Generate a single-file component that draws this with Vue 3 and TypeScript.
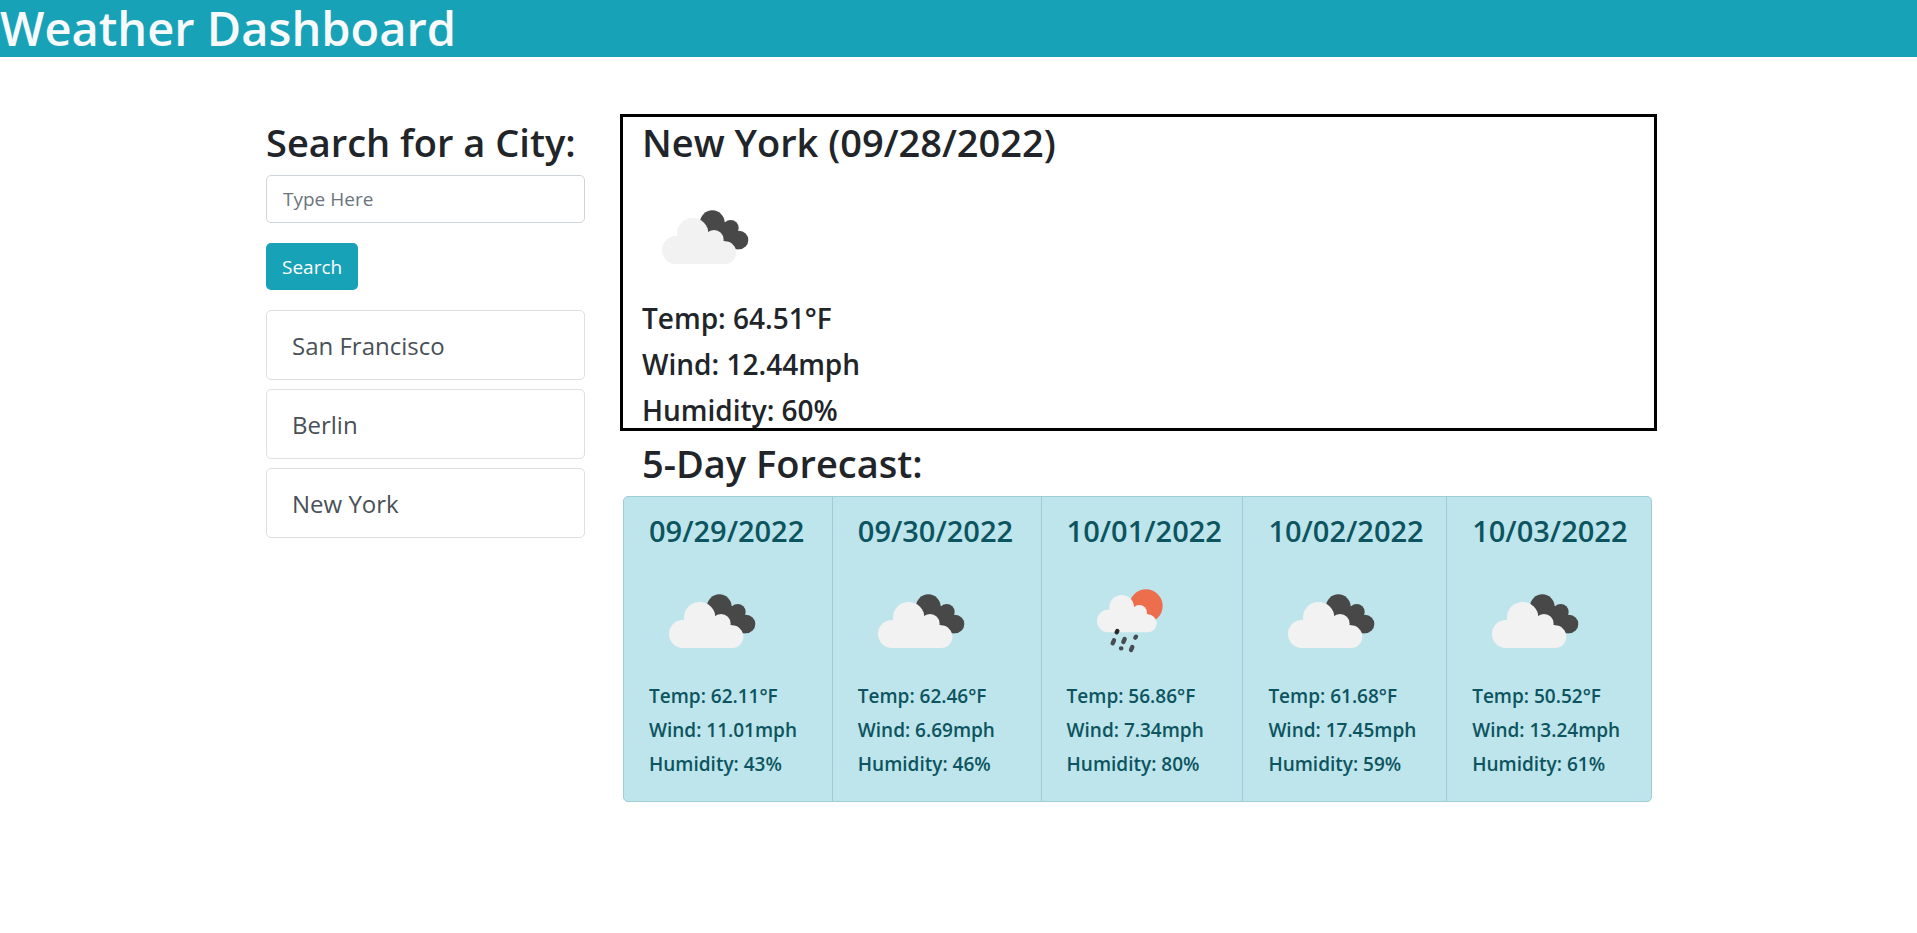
<script setup lang="ts">
import { ref } from 'vue'

type Condition = 'clouds' | 'rain'

interface Weather {
  date: string
  condition: Condition
  temp: string
  wind: string
  humidity: string
}

const query = ref('')
const history = ref<string[]>(['San Francisco', 'Berlin', 'New York'])
const city = ref('New York')

const current: Weather = { date: '09/28/2022', condition: 'clouds', temp: '64.51', wind: '12.44', humidity: '60' }

const forecast: Weather[] = [
  { date: '09/29/2022', condition: 'clouds', temp: '62.11', wind: '11.01', humidity: '43' },
  { date: '09/30/2022', condition: 'clouds', temp: '62.46', wind: '6.69', humidity: '46' },
  { date: '10/01/2022', condition: 'rain', temp: '56.86', wind: '7.34', humidity: '80' },
  { date: '10/02/2022', condition: 'clouds', temp: '61.68', wind: '17.45', humidity: '59' },
  { date: '10/03/2022', condition: 'clouds', temp: '50.52', wind: '13.24', humidity: '61' },
]

function search() {
  const name = query.value.trim()
  if (!name) return
  if (!history.value.includes(name)) history.value.push(name)
  city.value = name
  query.value = ''
}
</script>

<template>
  <svg class="symbols" aria-hidden="true">
    <symbol id="clouds" viewBox="0 0 375 375">
      <g fill="#484848">
        <circle cx="211" cy="143" r="37" />
        <circle cx="266" cy="159" r="24" />
        <circle cx="291" cy="195" r="28" />
        <path d="M192 165 242 138 286 164 291 223 252 223Z" />
      </g>
      <g fill="#f2f2f2">
        <circle cx="152" cy="176" r="47" />
        <circle cx="102" cy="225" r="42" />
        <circle cx="216" cy="194" r="29" />
        <circle cx="249" cy="233" r="34" />
        <path d="M102 267V183L152 176 216 194 249 199V267Z" />
      </g>
    </symbol>
    <symbol id="rain" viewBox="0 0 375 375">
      <circle cx="237" cy="141" r="50" fill="#ec6e4c" />
      <g fill="#f2f2f2">
        <circle cx="164" cy="145" r="37" />
        <circle cx="124" cy="186" r="34" />
        <circle cx="217" cy="161" r="23" />
        <circle cx="242" cy="193" r="27" />
        <path d="M124 220V152L164 145 217 161 242 166V220Z" />
      </g>
      <g stroke="#484b52" stroke-width="13" stroke-linecap="round">
        <path d="M149 220 151 216" stroke="#26282c" />
        <path d="M137 253 141 244M169 249 173 240M205 236 207 233M162 268H163M192 273 196 264" />
      </g>
    </symbol>
  </svg>

  <header class="banner">
    <h1>Weather Dashboard</h1>
  </header>

  <main class="container">
    <aside class="sidebar">
      <form @submit.prevent="search">
        <h2><label for="city">Search for a City:</label></h2>
        <input id="city" v-model="query" type="text" placeholder="Type Here" autocomplete="off" />
        <button class="submit" type="submit">Search</button>
      </form>
      <ul class="history">
        <li v-for="name in history" :key="name">
          <button type="button" @click="city = name">{{ name }}</button>
        </li>
      </ul>
    </aside>

    <div class="results">
      <section class="current">
        <h2>{{ city }} ({{ current.date }})</h2>
        <svg class="icon" role="img" :aria-label="current.condition"><use :href="'#' + current.condition" /></svg>
        <p>Temp: {{ current.temp }}°F</p>
        <p>Wind: {{ current.wind }}mph</p>
        <p>Humidity: {{ current.humidity }}%</p>
      </section>

      <section>
        <h2 class="forecast-title">5-Day Forecast:</h2>
        <ul class="forecast">
          <li v-for="day in forecast" :key="day.date">
            <h3>{{ day.date }}</h3>
            <svg class="icon" role="img" :aria-label="day.condition"><use :href="'#' + day.condition" /></svg>
            <p>Temp: {{ day.temp }}°F</p>
            <p>Wind: {{ day.wind }}mph</p>
            <p>Humidity: {{ day.humidity }}%</p>
          </li>
        </ul>
      </section>
    </div>
  </main>
</template>

<style>
body {
  margin: 0;
  background: #fff;
  color: #212529;
  font-family: 'Segoe UI', 'Open Sans', 'Noto Sans', sans-serif;
}
</style>

<style scoped>
* {
  box-sizing: border-box;
}

h1,
h2,
h3,
p,
ul {
  margin: 0;
  padding: 0;
}

ul {
  list-style: none;
}

input,
button {
  font-family: inherit;
}

.symbols {
  position: absolute;
  width: 0;
  height: 0;
}

.banner {
  background: #17a2b8;
  color: #f8f9fa;
}

h1 {
  font-size: 47px;
  font-weight: 600;
  line-height: 57px;
}

h2 {
  margin-bottom: 8px;
  font-size: 38px;
  font-weight: 600;
  line-height: 50px;
}

.container {
  display: grid;
  grid-template-columns: minmax(0, 319fr) minmax(0, 1037fr);
  gap: 35px;
  max-width: 1425px;
  margin: 0 auto;
  padding: 57px 14px 40px 20px;
}

.sidebar {
  padding-top: 3px;
}

.sidebar h2 {
  white-space: nowrap;
}

input {
  display: block;
  width: 100%;
  height: 48px;
  padding: 0 16px;
  border: 1px solid #ced4da;
  border-radius: 5px;
  color: #495057;
  font-size: 19px;
}

input::placeholder {
  color: #6c757d;
  opacity: 1;
}

.submit {
  height: 47px;
  margin: 20px 0;
  padding: 0 16px;
  border: 0;
  border-radius: 5px;
  background: #17a2b8;
  color: #fff;
  font-size: 19px;
  cursor: pointer;
}

.history {
  display: grid;
  gap: 9px;
}

.history button {
  width: 100%;
  height: 70px;
  padding: 0 25px;
  border: 1px solid #dfdfdf;
  border-radius: 5px;
  background: #fff;
  color: #495057;
  font-size: 24px;
  text-align: left;
  cursor: pointer;
}

.icon {
  display: block;
  width: 125px;
  height: 125px;
}

.current {
  padding: 0 19px;
  border: 3px solid #000;
}

.current p {
  font-size: 28px;
  font-weight: 600;
  line-height: 36px;
}

p + p {
  margin-top: 10px;
}

.forecast-title {
  margin-top: 7px;
  padding-left: 22px;
}

.forecast {
  display: grid;
  grid-template-columns: 208fr 209fr 202fr 204fr 205fr;
  margin: 0 5px 0 3px;
  border: 1px solid #9fcdd4;
  border-radius: 5px;
  background: #bee5eb;
  color: #0c5460;
}

.forecast li {
  min-width: 0;
  padding: 16px 0 25px 25px;
}

.forecast li + li {
  border-left: 1px solid #9fcdd4;
}

h3 {
  margin-bottom: 10px;
  font-size: 29px;
  font-weight: 600;
  line-height: 36px;
}

.forecast p {
  font-size: 19px;
  font-weight: 600;
  line-height: 24px;
}

@media (max-width: 1300px) {
  .container {
    grid-template-columns: minmax(0, 1fr);
  }

  .forecast {
    grid-template-columns: repeat(auto-fit, minmax(200px, 1fr));
  }
}
</style>
